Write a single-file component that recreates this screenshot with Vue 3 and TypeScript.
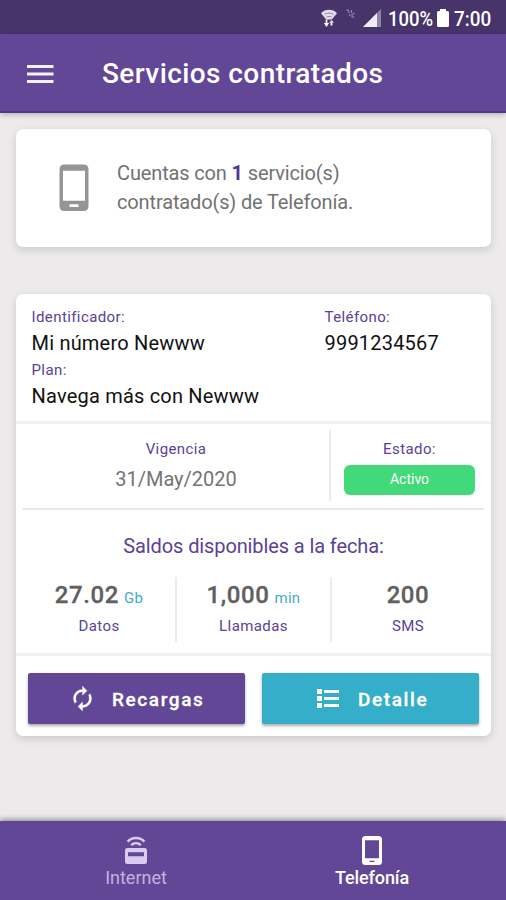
<script setup lang="ts">
interface Balance {
  amount: string
  unit?: string
  label: string
}

const balances: Balance[] = [
  { amount: '27.02', unit: 'Gb', label: 'Datos' },
  { amount: '1,000', unit: 'min', label: 'Llamadas' },
  { amount: '200', label: 'SMS' },
]
</script>

<template>
  <div class="screen">
    <div class="status-bar">
      <svg class="s-wifi" width="18" height="20" viewBox="0 0 18 20">
        <path d="M1 5.200C5 .600 13 .600 17 5.200L11.800 11.600H6.200z" fill="#e2dcec" />
        <path d="M4.500 6.300c2.600-1.600 6.400-1.600 9 0M6.300 9.200c1.600-1 3.800-1 5.400 0" fill="none" stroke="#7c6f9c" stroke-width=".8" />
        <path d="M6.500 11.500v4.500M11.500 17.500v-4" stroke="#fff" stroke-width="1.800" />
        <path d="M3.800 15h5.400l-2.700 4z" fill="#fff" />
        <path d="M9 14.800h5l-2.500-3z" fill="#d5cde2" />
      </svg>
      <svg class="s-mute" width="9" height="9" viewBox="0 0 9 9">
        <path d="M.5 1h2.500M1.500 1l2 3M5.500 1v3M8.500 4L6 5.500v2.500h2.500M3 7l1.500-2" fill="none" stroke="#9186ae" stroke-width="1.200" />
      </svg>
      <svg class="s-signal" width="18" height="18" viewBox="0 0 18 18">
        <path d="M0 18L18 0v18z" fill="#8e82aa" />
        <path d="M0 18L14 4v14z" fill="#f0edf5" />
      </svg>
      <span class="s-pct">100%</span>
      <svg class="s-bat" width="12" height="18" viewBox="0 0 12 18">
        <path d="M3 0h6v2h1.500Q12 2 12 3.500v13q0 1.500-1.500 1.500h-9Q0 18 0 16.500v-13Q0 2 1.500 2H3z" fill="#fff" />
      </svg>
      <span class="s-time">7:00</span>
    </div>

    <header class="app-bar">
      <svg class="menu" width="27" height="20" viewBox="0 0 27 20">
        <path d="M0 2.400h26.500M0 10h26.500M0 17.600h26.500" stroke="#f4f0fa" stroke-width="3" />
      </svg>
      <h1>Servicios contratados</h1>
    </header>

    <main>
      <section class="card summary">
        <svg width="30" height="48" viewBox="0 0 30 48">
          <path fill-rule="evenodd" fill="#959595" d="M5.500.500h19Q29.500.500 29.500 5.500v36.500Q29.500 47 24.500 47h-19Q.500 47 .500 42V5.500Q.500.500 5.500.500zM4 6.800v30h22v-30zM10.500 40.300v2.700h9v-2.700z" />
        </svg>
        <p>Cuentas con <b>1</b> servicio(s)<br />contratado(s) de Telefonía.</p>
      </section>

      <section class="card service">
        <div class="identity">
          <div class="col-main">
            <div class="label">Identificador:</div>
            <div class="value">Mi número Newww</div>
            <div class="label">Plan:</div>
            <div class="value">Navega más con Newww</div>
          </div>
          <div>
            <div class="label">Teléfono:</div>
            <div class="value">9991234567</div>
          </div>
        </div>

        <div class="details">
          <div class="validity">
            <div class="validity-cell">
              <div class="label">Vigencia</div>
              <div class="date">31/May/2020</div>
            </div>
            <div class="state-cell">
              <div class="label">Estado:</div>
              <div class="badge">Activo</div>
            </div>
          </div>
          <h2>Saldos disponibles a la fecha:</h2>
          <div class="balances">
            <div v-for="b in balances" :key="b.label" class="balance">
              <div class="amount"><span class="num">{{ b.amount }}</span><span v-if="b.unit" class="unit">{{ b.unit }}</span></div>
              <div class="label">{{ b.label }}</div>
            </div>
          </div>
        </div>

        <div class="actions">
          <button class="btn purple">
            <svg width="27" height="27" viewBox="0 0 24 24">
              <path fill="#fff" stroke="#fff" stroke-width=".3" d="M12 6v3l4-4-4-4v3c-4.420 0-8 3.580-8 8 0 1.570.460 3.030 1.240 4.260L6.700 14.800c-.450-.830-.700-1.790-.700-2.800 0-3.310 2.690-6 6-6zm6.760 1.740L17.300 9.200c.440.840.700 1.790.700 2.800 0 3.310-2.690 6-6 6v-3l-4 4 4 4v-3c4.420 0 8-3.580 8-8 0-1.570-.460-3.030-1.240-4.260z" />
            </svg>
            <span class="t-rec">Recargas</span>
          </button>
          <button class="btn cyan">
            <svg width="22" height="19" viewBox="0 0 22 19">
              <path fill="#fff" d="M0 0h5v5H0zM0 7h5v5H0zM0 14h5v5H0zM7 1h15v3H7zM7 8h15v3H7zM7 15h15v3H7z" />
            </svg>
            <span class="t-det">Detalle</span>
          </button>
        </div>
      </section>
    </main>

    <nav>
      <div class="tab">
        <svg width="22" height="29" viewBox="0 0 22 29">
          <path fill-rule="evenodd" fill="#dccbf0" d="M2.500 12h17Q22 12 22 14.500v11Q22 28 19.500 28h-17Q0 28 0 25.500v-11Q0 12 2.500 12zM3 16.300v3.900h16v-3.900z" />
          <path d="M2.600 5.600C7 .800 15 .800 19.400 5.600M6.200 9.200c2.700-2.800 6.900-2.800 9.600 0" fill="none" stroke="#dccbf0" stroke-width="2.400" />
        </svg>
        <span>Internet</span>
      </div>
      <div class="tab active">
        <svg width="20" height="29" viewBox="0 0 20 29">
          <path fill-rule="evenodd" fill="#fff" d="M3.500 0h13Q20 0 20 3.500v22Q20 29 16.500 29h-13Q0 29 0 25.500v-22Q0 0 3.500 0zM3 4.200v18h14v-18zM7.500 24.800v1.200h5v-1.200z" />
        </svg>
        <span>Telefonía</span>
      </div>
    </nav>
  </div>
</template>

<style>
body {
  background: #eceaeb;
}
</style>

<style scoped>
.screen {
  width: 506px;
  height: 900px;
  display: flex;
  flex-direction: column;
  overflow: hidden;
  background: #eceaeb;
  font-family: Roboto, sans-serif;
}
.status-bar {
  height: 34px;
  flex: none;
  display: flex;
  align-items: flex-start;
  justify-content: flex-end;
  padding-right: 15px;
  box-sizing: border-box;
  background: #46346b;
  color: #fff;
  font-size: 21px;
  line-height: 24px;
}
.status-bar svg { flex: none; }
.s-wifi { margin: 8px 8px 0 0; }
.s-mute { margin: 9px 8px 0 0; }
.s-signal { margin: 9px 7px 0 0; }
.s-pct,
.s-time {
  margin-top: 7px;
  white-space: nowrap;
  font-weight: 500;
  transform-origin: left;
}
.s-pct { width: 44px; margin-right: 5px; transform: scaleX(0.88); }
.s-bat { margin: 9px 5px 0 0; }
.s-time { width: 37px; transform: scaleX(0.9); }
.app-bar {
  height: 79px;
  flex: none;
  display: flex;
  align-items: center;
  box-sizing: border-box;
  padding: 3px 0 0 27px;
  background: #624796;
  border-bottom: 2px solid #553489;
  box-shadow: 0 2px 5px rgba(0, 0, 0, 0.22);
}
h1 {
  margin: 0 0 0 48px;
  color: #fff;
  font-size: 28px;
  font-weight: 500;
  line-height: 32px;
  letter-spacing: 0.420px;
}
main {
  flex: 1;
  padding: 16px 15px 0 16px;
}
.card {
  background: #fff;
  border-radius: 7px;
  box-shadow: 0 3px 8px rgba(0, 0, 0, 0.14);
}
.summary {
  height: 118px;
  box-sizing: border-box;
  display: flex;
  align-items: center;
  padding-left: 43px;
}
.summary p {
  margin: 0 0 0 28px;
  font-size: 20px;
  line-height: 29.500px;
  letter-spacing: -0.140px;
  color: #727272;
}
.summary b { color: #533790; }
.service { margin-top: 47px; height: 442px; }
.identity {
  height: 127px;
  box-sizing: border-box;
  display: flex;
  padding: 10px 0 0 15.500px;
}
.col-main { width: 293px; }
.label {
  font-size: 15px;
  line-height: 26.400px;
  letter-spacing: 0.400px;
  color: #5b4198;
}
.value {
  font-size: 20px;
  line-height: 26.400px;
  letter-spacing: 0.200px;
  color: #111;
}
.details {
  height: 235px;
  box-sizing: border-box;
  border-top: 3px solid #f1f1f1;
  border-bottom: 3px solid #f1f1f1;
  padding: 6px 7px 0;
}
.validity {
  display: flex;
  height: 80px;
  box-sizing: border-box;
  border-bottom: 2px solid #e8e8e8;
  text-align: center;
}
.validity-cell {
  width: 308px;
  height: 71px;
  box-sizing: border-box;
  border-right: 2px solid #ececec;
  padding-top: 6px;
}
.state-cell { flex: 1; padding: 6px 9px 0 13px; }
.date {
  font-size: 20px;
  line-height: 26px;
  margin-top: 4px;
  color: #747474;
}
.badge {
  height: 30px;
  margin-top: 2.500px;
  border-radius: 6px;
  background: #42d97b;
  color: #fff;
  font-size: 14px;
  line-height: 29px;
}
h2 {
  margin: 22px 0 0;
  font-size: 20px;
  font-weight: 400;
  line-height: 28px;
  letter-spacing: -0.110px;
  text-align: center;
  color: #5b4198;
}
.balances {
  display: flex;
  height: 65px;
  margin: 17px -7px 0;
  text-align: center;
}
.balance { width: 155px; border-left: 2px solid #ececec; box-sizing: border-box; }
.balance:first-child { width: 159px; border-left: 0; padding-left: 7px; }
.balance:last-child { flex: 1; padding-right: 7px; }
.amount { line-height: 37px; color: #606060; height: 36px; }
.num { font-size: 24px; font-weight: 500; letter-spacing: 0.600px; -webkit-text-stroke: 0.300px #606060; }
.unit { font-size: 15px; margin-left: 5px; letter-spacing: 0.300px; color: #42aec9; }
.actions {
  display: flex;
  gap: 17px;
  padding: 17px 12px 0;
}
.btn {
  width: 217px;
  height: 51px;
  border: 0;
  padding: 0;
  border-radius: 2px;
  display: flex;
  align-items: center;
  box-sizing: border-box;
  font-family: Roboto, sans-serif;
  font-size: 19px;
  font-weight: 500;
  color: #fff;
  -webkit-text-stroke: 0.300px #fff;
  box-shadow: 0 2px 3px rgba(0, 0, 0, 0.32);
}
.btn span { padding-top: 1px; }
.purple { background: #624796; padding-left: 41px; }
.cyan { background: #35aec9; padding-left: 55px; }
.t-rec { margin-left: 16px; letter-spacing: 1.600px; }
.t-det { margin-left: 19px; letter-spacing: 1.600px; }
nav {
  height: 79px;
  flex: none;
  display: flex;
  padding: 0 16px 0 18px;
  background: #624796;
  box-shadow: 0 -2px 5px rgba(0, 0, 0, 0.35);
}
.tab {
  flex: 1;
  display: flex;
  flex-direction: column;
  align-items: center;
  padding-top: 15px;
  color: #c3b3dc;
  font-size: 18px;
  line-height: 26px;
}
.active { color: #fff; font-weight: 500; letter-spacing: -0.100px; }
</style>
